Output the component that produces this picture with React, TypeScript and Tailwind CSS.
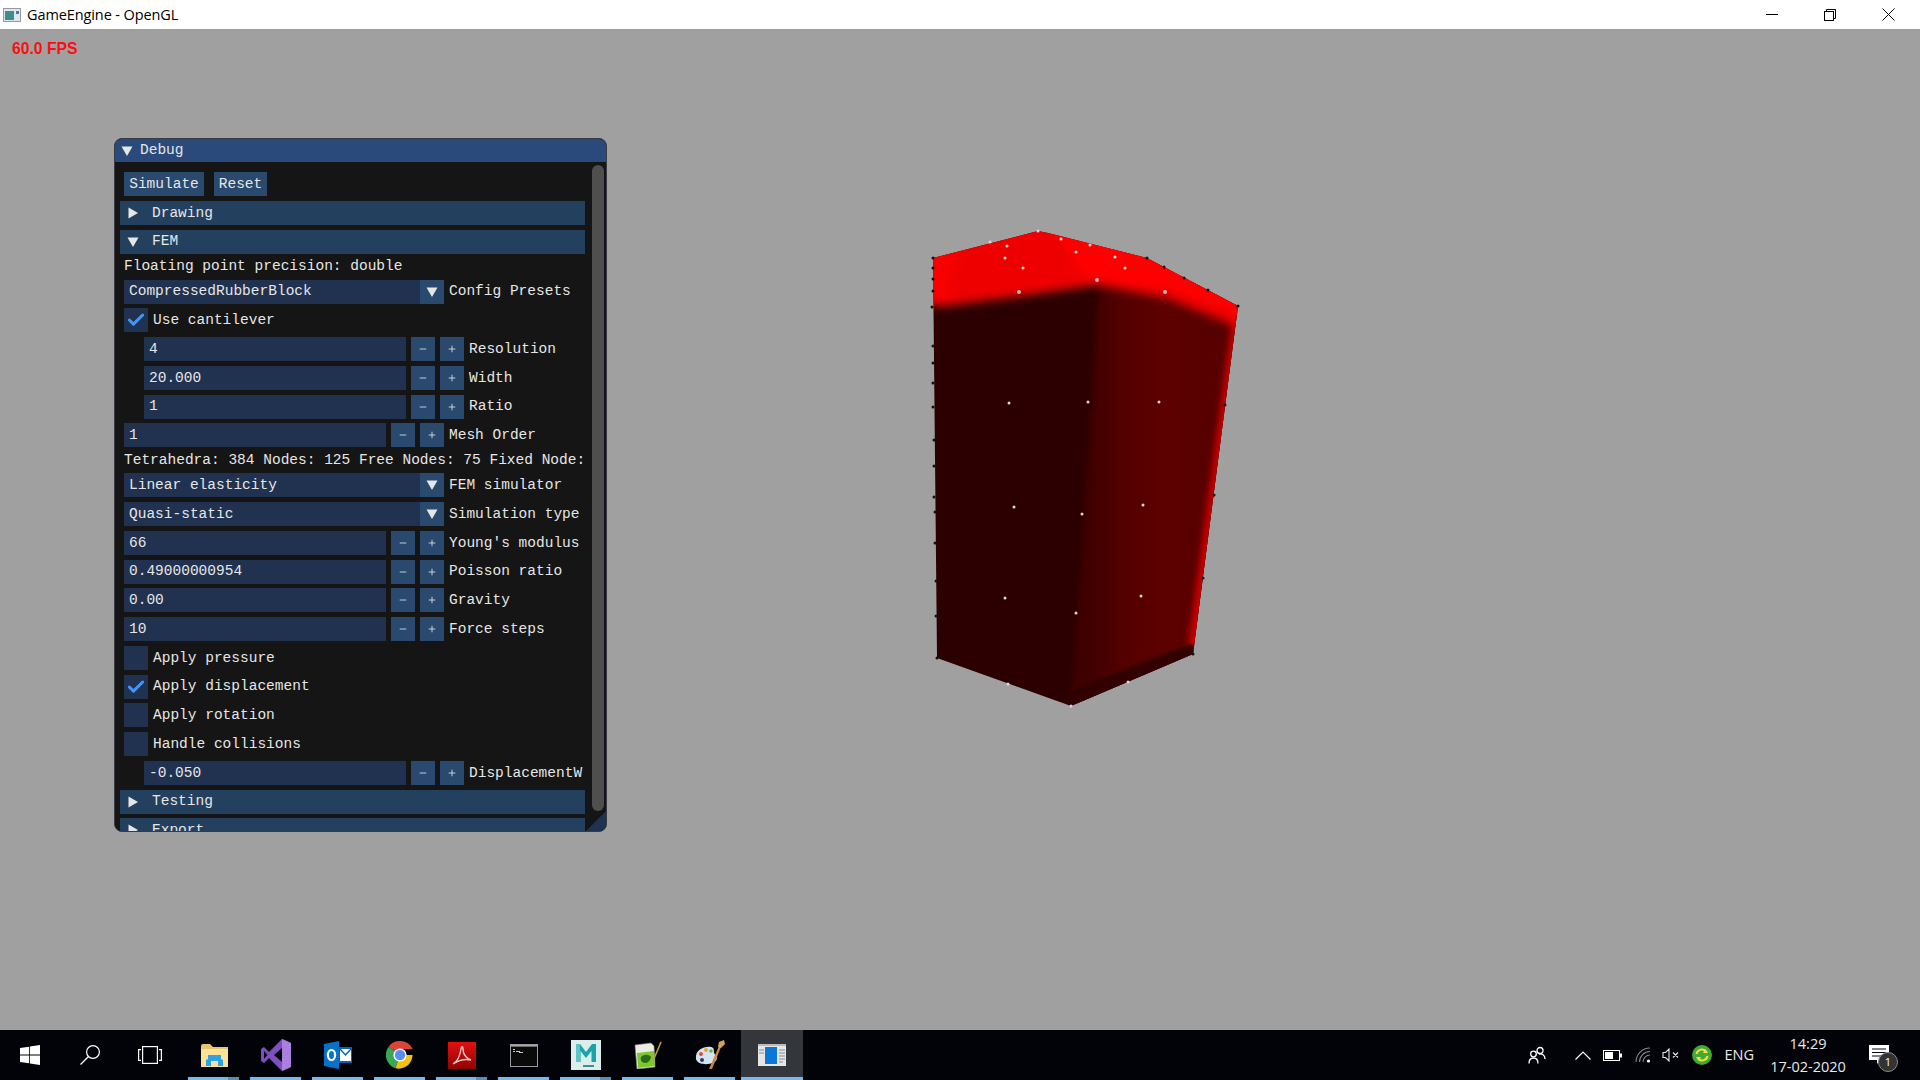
import type { ReactNode } from "react";
import { Check, Minus, Plus } from "lucide-react";

const mono = "font-['Liberation_Mono','DejaVu_Sans_Mono',monospace]";

function Caret({ open }: { open: boolean }) {
  return (
    <svg viewBox="0 0 12 12" className="h-3 w-3 shrink-0 fill-[#e6e6e6]">
      <path d={open ? "M0.5 1.5h11L6 11Z" : "M1.5 0.5v11L11 6Z"} />
    </svg>
  );
}

function Header({ label, open = false }: { label: string; open?: boolean }) {
  return (
    <div className="-mx-1 flex h-6 shrink-0 items-center gap-[13px] bg-[#24405f] pl-[7px]">
      <Caret open={open} />
      <span>{label}</span>
    </div>
  );
}

function CheckRow({ label, checked = false }: { label: string; checked?: boolean }) {
  return (
    <div className="flex h-6 shrink-0 items-center gap-[5px]">
      <span className="flex h-6 w-6 items-center justify-center bg-[#20324f]">
        {checked && <Check size={20} strokeWidth={3.6} className="text-[#4296fa]" />}
      </span>
      <span>{label}</span>
    </div>
  );
}

function Combo({ value, label }: { value: string; label: string }) {
  return (
    <div className="flex h-6 shrink-0 items-center">
      <div className="flex h-full w-[296px] shrink-0 items-center bg-[#20324f] pl-[5px]">{value}</div>
      <div className="flex h-full w-6 shrink-0 items-center justify-center bg-[#29496f]">
        <Caret open />
      </div>
      <span className="ml-[5px] whitespace-nowrap">{label}</span>
    </div>
  );
}

function NumberRow({ value, label, indent = false }: { value: string; label: string; indent?: boolean }) {
  return (
    <div className={`flex h-6 shrink-0 items-center ${indent ? "ml-5" : ""}`}>
      <div className="flex h-full w-[262px] shrink-0 items-center bg-[#20324f] pl-[5px]">{value}</div>
      <span className="ml-[5px] flex h-full w-6 shrink-0 items-center justify-center bg-[#29496f]">
        <Minus size={10} strokeWidth={2} />
      </span>
      <span className="ml-[5px] flex h-full w-6 shrink-0 items-center justify-center bg-[#29496f]">
        <Plus size={10} strokeWidth={2} />
      </span>
      <span className="ml-[5px] whitespace-nowrap">{label}</span>
    </div>
  );
}

function DebugWindow() {
  return (
    <div className={`absolute left-[114px] top-[109px] flex h-[694px] w-[493px] flex-col overflow-hidden rounded-[8px] border border-[#3a3a42] bg-[#151515] text-[14.5px] leading-none text-[#e6e6e6] ${mono}`}>
      <div className="flex h-[23px] shrink-0 items-center gap-[7px] bg-[#294a7a] pl-[6px]">
        <Caret open />
        <span>Debug</span>
      </div>
      <div className="relative flex min-h-0 flex-1">
        <div className="flex w-[471px] shrink-0 flex-col gap-[4.75px] overflow-hidden pl-[9px] pr-[5px] pt-[10px]">
          <div className="flex shrink-0 gap-[10px]">
            <span className="flex h-6 w-20 items-center justify-center bg-[#29496f]">Simulate</span>
            <span className="flex h-6 w-[53px] items-center justify-center bg-[#29496f]">Reset</span>
          </div>
          <Header label="Drawing" />
          <Header label="FEM" open />
          <div className="flex h-[16.5px] shrink-0 items-center whitespace-nowrap">Floating point precision: double</div>
          <Combo value="CompressedRubberBlock" label="Config Presets" />
          <CheckRow label="Use cantilever" checked />
          <NumberRow indent value="4" label="Resolution" />
          <NumberRow indent value="20.000" label="Width" />
          <NumberRow indent value="1" label="Ratio" />
          <NumberRow value="1" label="Mesh Order" />
          <div className="flex h-[16.5px] shrink-0 items-center whitespace-nowrap">Tetrahedra: 384 Nodes: 125 Free Nodes: 75 Fixed Node:</div>
          <Combo value="Linear elasticity" label="FEM simulator" />
          <Combo value="Quasi-static" label="Simulation type" />
          <NumberRow value="66" label="Young's modulus" />
          <NumberRow value="0.49000000954" label="Poisson ratio" />
          <NumberRow value="0.00" label="Gravity" />
          <NumberRow value="10" label="Force steps" />
          <CheckRow label="Apply pressure" />
          <CheckRow label="Apply displacement" checked />
          <CheckRow label="Apply rotation" />
          <CheckRow label="Handle collisions" />
          <NumberRow indent value="-0.050" label="DisplacementW" />
          <Header label="Testing" />
          <Header label="Export" />
        </div>
        <div className="ml-[6px] mt-[3px] h-[646px] w-3 shrink-0 rounded-md bg-[#4f4f4f]" />
        <svg viewBox="0 0 20 20" className="absolute bottom-0 right-0 h-5 w-5 fill-[#1d3350]">
          <path d="M20 0v20H0Z" />
        </svg>
      </div>
    </div>
  );
}

const dotsLight = [
  [1007, 246], [1005, 258], [1023, 268], [1061, 239], [1076, 252], [1090, 245], [1115, 257], [1125, 268],
  [1009, 403], [1088, 402], [1159, 402], [1014, 507], [1082, 514], [1143, 505],
  [1005, 598], [1076, 613], [1141, 596], [1008, 684], [1128, 682], [1071, 706], [1038, 231], [990, 242],
];
const dotsBig = [[1097, 280], [1019, 292], [1165, 292]];
const dotsDark = [
  [933, 258], [933, 268], [933, 279], [933, 291], [932, 307], [933, 346], [933, 363], [933, 383], [933, 407],
  [934, 440], [934, 466], [934, 497], [935, 512], [935, 543], [936, 581], [936, 616], [937, 658],
  [1238, 306], [1208, 290], [1184, 278], [1164, 267], [1147, 258], [1225, 405], [1214, 495], [1203, 578], [1193, 654],
];

// viewBox starts at y=29 so the mesh points are screen coordinates
function Mesh() {
  return (
    <svg viewBox="0 29 1920 1001" className="absolute inset-0 h-full w-full">
      <defs>
        <linearGradient id="rightFace" gradientUnits="userSpaceOnUse" x1="1090" y1="0" x2="1235" y2="0">
          <stop offset="0" stopColor="#3f0000" />
          <stop offset="0.2" stopColor="#520000" />
          <stop offset="0.5" stopColor="#5c0000" />
          <stop offset="1" stopColor="#550000" />
        </linearGradient>
        <linearGradient id="topLeft" gradientUnits="userSpaceOnUse" x1="940" y1="250" x2="1080" y2="280">
          <stop offset="0" stopColor="#fc0000" />
          <stop offset="0.2" stopColor="#ee0000" />
          <stop offset="1" stopColor="#f00000" />
        </linearGradient>
        <filter id="blurWide" x="-20%" y="-20%" width="140%" height="140%"><feGaussianBlur stdDeviation="5" /></filter>
        <filter id="blurMid" x="-20%" y="-20%" width="140%" height="140%"><feGaussianBlur stdDeviation="3" /></filter>
        <filter id="blurThin" x="-20%" y="-20%" width="140%" height="140%"><feGaussianBlur stdDeviation="1.5" /></filter>
        <clipPath id="block">
          <path d="M933 258 1038 231 1048 233 1147 258 1183 277 1238 306 1193 654 1071 706 937 658Z" />
        </clipPath>
      </defs>
      <g clipPath="url(#block)">
        <rect x="920" y="220" width="330" height="500" fill="#2c0000" />
        <path d="M1099 280H1250V700H1070L1073 683 1085 510Z" fill="url(#rightFace)" filter="url(#blurMid)" />
        <path d="M1243 300 1198 660H1186L1232 320Z" fill="#c80000" filter="url(#blurMid)" />
        <path d="M1071 712 1195 660V646L1190 644 1077 688 1068 690Z" fill="#300000" filter="url(#blurThin)" />
        <path d="M920 210H1250V332L1167 298 1097 285 1020 296 945 306 920 304Z" fill="url(#topLeft)" filter="url(#blurWide)" />
        <path d="M1045 225 1070 250 1080 272 1097 278 1170 288 1250 318V220Z" fill="#ff0000" filter="url(#blurMid)" />
      </g>
      {dotsLight.map(([x, y]) => (
        <circle key={`${x}-${y}`} cx={x} cy={y} r="1.5" fill="#d8d8d8" />
      ))}
      {dotsBig.map(([x, y]) => (
        <circle key={`${x}-${y}`} cx={x} cy={y} r="2" fill="#b8b8b8" />
      ))}
      {dotsDark.map(([x, y]) => (
        <circle key={`${x}-${y}`} cx={x} cy={y} r="1.5" fill="#111111" />
      ))}
    </svg>
  );
}

function TaskItem({ children, split = false, active = false }: { children: ReactNode; split?: boolean; active?: boolean }) {
  return (
    <div className={`relative flex h-full w-[62px] shrink-0 items-center justify-center ${active ? "bg-[#33363a]" : ""}`}>
      {children}
      <span className={`absolute bottom-0 flex h-[3px] bg-[#76b9ed] ${active ? "left-0 right-0" : "left-[5px] right-[6px]"}`}>
        {split && <span className="ml-auto w-[11px] bg-[#5a8db5]" />}
      </span>
    </div>
  );
}

function Taskbar() {
  return (
    <div className="flex h-[50px] shrink-0 items-center bg-[#020308] font-['Open_Sans',sans-serif] text-[#e8e8e8]">
      <div className="flex h-full w-[60px] items-center justify-center">
        <svg viewBox="0 0 20 20" className="h-5 w-5 fill-white">
          <path d="M0 3 9.2 1.7V9.5H0ZM10 1.6 20 0V9.5H10ZM0 10.4H9.2V18.3L0 17ZM10 10.4H20V20L10 18.4Z" />
        </svg>
      </div>
      <div className="flex h-full w-[60px] items-center justify-center">
        <svg viewBox="0 0 20 20" className="h-5 w-5 fill-none stroke-white stroke-[1.2]">
          <circle cx="13" cy="7" r="6.4" />
          <path d="M8.5 11.5 0.5 19.5" />
        </svg>
      </div>
      <div className="flex h-full w-[60px] items-center justify-center">
        <svg viewBox="0 0 24 18" className="h-[18px] w-6 fill-none stroke-white stroke-[1.2]">
          <rect x="4.6" y="0.6" width="14.8" height="16.8" />
          <path d="M3 3.6H0.6V14.4H3M21 3.6H23.4V14.4H21" />
        </svg>
      </div>
      <div className="ml-[3px] flex h-full items-center">
        <TaskItem split>
          <svg viewBox="0 0 27 23" className="h-[23px] w-[27px]">
            <path d="M0 2Q0 0 2 0H9L12 3H27V23H0Z" fill="#e9c46a" />
            <path d="M0 5H27V23H0Z" fill="#fbe29b" />
            <path d="M7 11H20V15L22 16V22H17V17H10V22H5V16L7 15Z" fill="#2ea3e3" />
          </svg>
        </TaskItem>
        <TaskItem>
          <svg viewBox="0 0 30 32" className="h-8 w-[30px]">
            <path d="M21 0 30 4V28L21 32 8 19 3 24 0 22V10L3 8 8 13Z" fill="#7f4fc0" />
            <path d="M21 9 13 16 21 23Z" fill="#020308" />
            <path d="M3 12 6.5 16 3 20Z" fill="#020308" />
            <path d="M21 0 30 4V28L21 32V23 9Z" fill="#ab7fe0" />
          </svg>
        </TaskItem>
        <TaskItem>
          <svg viewBox="0 0 28 28" className="h-7 w-7">
            <path d="M15 6H28V22H15Z" fill="#0a64b4" />
            <path d="M16 8H27V20H16Z" fill="#ffffff" />
            <path d="m16 8 5.5 6L27 8" fill="none" stroke="#0a64b4" strokeWidth="1.5" />
            <path d="M0 3 15 0V28L0 25Z" fill="#0a72c6" />
            <ellipse cx="7.5" cy="14" rx="3.6" ry="5" fill="none" stroke="#ffffff" strokeWidth="2.2" />
          </svg>
        </TaskItem>
        <TaskItem>
          <svg viewBox="0 0 28 28" className="h-7 w-7">
            <path d="M14 14 2.4 6A14 14 0 0 1 26.6 8H14Z" fill="#db4437" />
            <path d="M14 14 9.5 27.3A14 14 0 0 1 2.4 6Z" fill="#3aa757" />
            <path d="M14 14H26.6A14 14 0 0 1 9.5 27.3Z" fill="#f4c20d" />
            <circle cx="14" cy="14" r="6.6" fill="#ffffff" />
            <circle cx="14" cy="14" r="5.2" fill="#5a8df0" />
          </svg>
        </TaskItem>
        <TaskItem split>
          <svg viewBox="0 0 28 27" className="h-[27px] w-7">
            <defs>
              <linearGradient id="acro" x1="0" y1="0" x2="0" y2="1">
                <stop offset="0" stopColor="#e30f0f" />
                <stop offset="1" stopColor="#8e0505" />
              </linearGradient>
            </defs>
            <rect width="28" height="27" fill="url(#acro)" />
            <path d="M5 22c5-3 7-8 8-15 .2-3 2-3 2 0 0 5 3 9 8 11-5-1-12 0-18 4Z" fill="none" stroke="#f5c6c6" strokeWidth="1.4" />
          </svg>
        </TaskItem>
        <TaskItem>
          <svg viewBox="0 0 28 23" className="h-[23px] w-7">
            <rect x="0.5" y="0.5" width="27" height="22" fill="#0a0a0a" stroke="#9a9a9a" />
            <rect x="1" y="1" width="26" height="1.6" fill="#a8a8a8" />
            <path d="M3 5h2v1H3ZM3 7h2v1H3ZM6 7h4v1H6ZM9 8h4v1H9Z" fill="#c8c8c8" />
          </svg>
        </TaskItem>
        <TaskItem split>
          <svg viewBox="0 0 30 30" className="h-[30px] w-[30px]">
            <rect width="30" height="30" fill="#dbeeec" />
            <path d="M5 22V4H9L15 12 21 4H25V22H20.5V11L15 18 9.500 11V22Z" fill="#1aa3a8" />
            <path d="M5 4H9L9.500 22H5Z" fill="#5fc3c6" />
            <rect x="12" y="25" width="11" height="2" fill="#3f8e93" />
          </svg>
        </TaskItem>
        <TaskItem>
          <svg viewBox="0 0 28 28" className="h-7 w-7">
            <path d="M1 4 17 2 20 5 21 26 3 28Z" fill="#ecece4" stroke="#8a8a8a" strokeWidth="0.6" />
            <path d="M3 12 20 10 21 25 4 27Z" fill="#7ec82f" />
            <path d="M7 16c3-3 8-3 10 0-1 4-3 6-6 6-3 0-5-3-4-6Z" fill="#2c6a17" />
            <path d="M19 20 27 1" stroke="#c89a3a" strokeWidth="1.6" />
          </svg>
        </TaskItem>
        <TaskItem>
          <svg viewBox="0 0 30 30" className="h-[30px] w-[30px]">
            <path d="M1 19C0 10 9 6 16 7c3 .5 3 3 3 5 0 3 3 3 3 6 0 7-19 9-21 1Z" fill="#d3e5f0" />
            <circle cx="6" cy="14" r="2" fill="#e24a3a" />
            <circle cx="11" cy="10" r="2" fill="#e8a52c" />
            <circle cx="16" cy="11" r="1.8" fill="#6fb03e" />
            <circle cx="7" cy="20" r="2" fill="#2a3f5f" />
            <path d="M14 29 24 6l2 1-9 22Z" fill="#c7873f" />
            <path d="M23 7 24 2 29 0 30 4 26 8Z" fill="#d9a05a" />
          </svg>
        </TaskItem>
        <TaskItem active>
          <svg viewBox="0 0 28 22" className="h-[22px] w-7">
            <rect width="28" height="22" fill="#e6e6e6" />
            <rect width="28" height="2" fill="#bbbbbb" />
            <rect x="7" y="3" width="12" height="17" fill="#0a78d7" />
            <path d="M1 6h5M1 9h5M21 6h6M21 9h6M21 12h6M21 15h6M21 18h4" stroke="#8a8a8a" />
          </svg>
        </TaskItem>
      </div>
      <div className="ml-auto flex h-full items-center">
        <svg viewBox="0 0 18 18" className="mr-[29px] h-[18px] w-[18px] fill-none stroke-white stroke-[1.3]">
          <circle cx="12" cy="4.500" r="3" />
          <circle cx="5.500" cy="8" r="2.800" />
          <path d="M1 17.500c0-4 2-5.500 4.500-5.500S10 13.500 10 17.500M11 8c3-.5 6 1 6 5" />
        </svg>
        <svg viewBox="0 0 16 9" className="mr-[12px] h-[9px] w-4 fill-none stroke-white stroke-[1.2]">
          <path d="M0.500 8.500 8 1l7.500 7.500" />
        </svg>
        <svg viewBox="0 0 19 11" className="mr-[13px] h-[11px] w-[19px]">
          <rect x="0.500" y="0.500" width="16" height="10" fill="none" stroke="#ffffff" />
          <rect x="2" y="2" width="8" height="7" fill="#ffffff" />
          <rect x="17" y="3.500" width="2" height="4" fill="#ffffff" />
        </svg>
        <svg viewBox="0 0 16 16" className="mr-[11px] h-4 w-4 fill-none stroke-[#8a8a8a] stroke-[1.1]">
          <path d="M1 15A14 14 0 0 1 15 1M4.500 15A10.500 10.500 0 0 1 15 4.500M8 15A7 7 0 0 1 15 8" />
          <circle cx="13.500" cy="14" r="1.600" fill="#ffffff" stroke="none" />
        </svg>
        <svg viewBox="0 0 18 14" className="mr-[12px] h-[14px] w-[18px] fill-none stroke-[#e8e8e8] stroke-[1.1]">
          <path d="M1 4.500h2.500L7 1v12L3.500 9.500H1ZM11 4.500l5 5M16 4.500l-5 5" />
        </svg>
        <svg viewBox="0 0 20 20" className="mr-[12px] h-5 w-5">
          <circle cx="10" cy="10" r="10" fill="#43a83a" />
          <path d="M4.500 9a5.500 5.500 0 0 1 10-2M15.500 11a5.500 5.500 0 0 1-10 2" fill="none" stroke="#f2e23a" strokeWidth="2" />
          <path d="m13 4 3 4-5 0ZM7 16l-3-4 5 0Z" fill="#f2e23a" />
        </svg>
        <span className="mr-[16px] text-[14.5px]">ENG</span>
        <div className="mr-[23px] flex w-[76px] flex-col items-center whitespace-nowrap text-[14.5px] leading-[23px]">
          <span>14:29</span>
          <span>17-02-2020</span>
        </div>
        <div className="relative mr-[31px] h-5 w-5">
          <svg viewBox="0 0 20 20" className="h-5 w-5">
            <path d="M0 0h20v15H11l-3 4v-4H0Z" fill="#ffffff" />
            <path d="M3 4h14M3 7.500h14M3 11h10" stroke="#020308" strokeWidth="1" />
          </svg>
          <span className="absolute left-[9px] top-[7px] flex h-5 w-5 items-center justify-center rounded-full border border-[#8a8a8a] bg-[#333333] text-[11px] text-white">1</span>
        </div>
      </div>
    </div>
  );
}

export default function App() {
  return (
    <div className="flex h-[1080px] w-[1920px] flex-col overflow-hidden bg-[#a0a0a0]">
      <div className="flex h-[29px] shrink-0 items-center bg-white font-['Open_Sans',sans-serif] text-black">
        <svg viewBox="0 0 18 14" className="ml-[3px] mr-[6px] h-[14px] w-[18px]">
          <rect x="0.500" y="0.500" width="17" height="13" fill="#dfe7ea" stroke="#999999" />
          <rect x="2" y="3" width="9" height="9" fill="#3d8f8f" />
          <rect x="13" y="3" width="3" height="3" fill="#3d7fb5" />
        </svg>
        <span className="text-[14.5px] tracking-[-0.1px]">GameEngine - OpenGL</span>
        <div className="ml-auto mr-[3px] flex h-full items-center">
          <div className="flex h-full w-[58px] items-center justify-center">
            <span className="h-px w-3 bg-black" />
          </div>
          <div className="flex h-full w-[58px] items-center justify-center">
            <svg viewBox="0 0 12 12" className="h-3 w-3 fill-none stroke-black">
              <path d="M2.500 2.500V.5h9v9h-2" />
              <rect x="0.500" y="2.500" width="9" height="9" />
            </svg>
          </div>
          <div className="flex h-full w-[58px] items-center justify-center">
            <svg viewBox="0 0 13 13" className="h-[13px] w-[13px] stroke-black">
              <path d="M.5.5l12 12M12.500.5l-12 12" />
            </svg>
          </div>
        </div>
      </div>
      <div className="relative min-h-0 flex-1">
        <span className="absolute left-3 top-[10px] font-['Liberation_Sans',sans-serif] text-[15.7px] font-bold leading-5 text-[#f81010]">60.0 FPS</span>
        <Mesh />
        <DebugWindow />
      </div>
      <Taskbar />
    </div>
  );
}
